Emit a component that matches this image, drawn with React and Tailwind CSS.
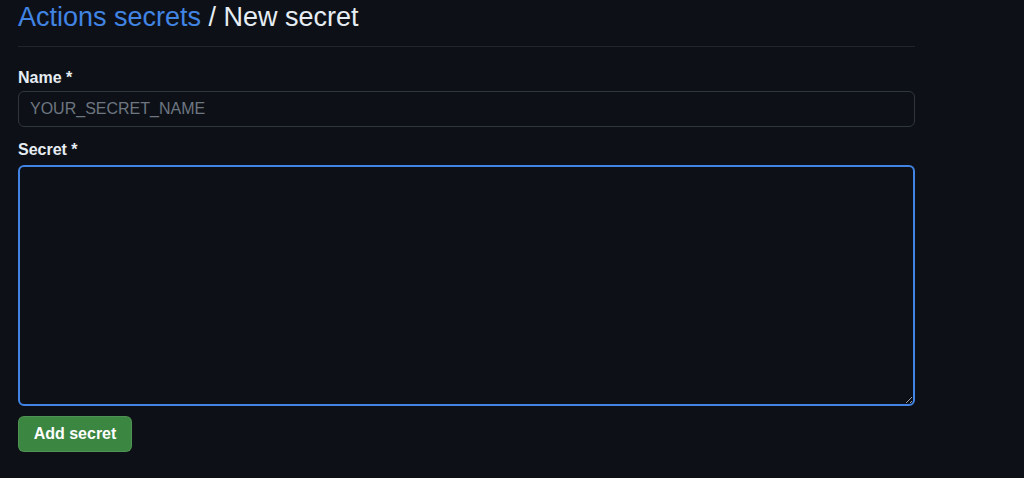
// New secret form, dark theme

export default function App() {
  return (
    <div className="min-h-[478px] bg-[#0d1117] font-['Liberation_Sans',Arial,sans-serif] text-[#e6edf3]">
      <div className="w-[915px] pl-[18px]">
        {/* Header */}
        <div className="border-b border-[#21262d] pb-[12px]">
          <h1 className="text-[27px] leading-[34px] font-normal">
            <a href="#" className="text-[#4184e4]">Actions secrets</a>
            <span> / New secret</span>
          </h1>
        </div>

        {/* Name */}
        <div className="mt-[21px]">
          <label className="block text-[16px] leading-[20px] font-bold">Name *</label>
          <input
            type="text"
            placeholder="YOUR_SECRET_NAME"
            className="mt-[3px] block h-[36px] w-full rounded-[6px] border border-[#30363d] bg-[#0d1117] px-[11px] text-[16px] text-[#e6edf3] placeholder:text-[#6e7681] outline-none"
          />
        </div>

        {/* Secret */}
        <div className="mt-[13px]">
          <label className="block text-[16px] leading-[20px] font-bold">Secret *</label>
          <textarea
            className="mt-[5px] block h-[241px] w-full rounded-[6px] border-2 border-[#4184e4] bg-[#0d1117] px-[12px] py-[6px] text-[16px] text-[#e6edf3] outline-none"
          />
        </div>

        <button className="mt-[10px] h-[36px] w-[114px] rounded-[6px] border border-[#ffffff1a] bg-[#3b8640] text-[16px] font-bold text-white">
          Add secret
        </button>
      </div>
    </div>
  );
}
